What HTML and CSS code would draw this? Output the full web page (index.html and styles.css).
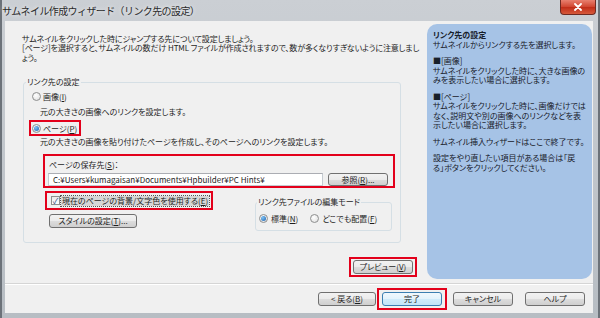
FILE: index.html
```html
<!DOCTYPE html>
<html lang="ja">
<head>
  <meta charset="UTF-8">
  <title>サムネイル作成ウィザード</title>
  <link rel="stylesheet" href="styles.css">
</head>
<body>
  <div class="window">
    <div class="titlebar">
      <span class="title">サムネイル作成ウィザード（リンク先の設定）</span>
      <div class="close">
        <svg width="10" height="8" viewBox="0 0 10 8">
          <path d="M2 1 L8 7 M8 1 L2 7" stroke="#fff" stroke-width="1.8" stroke-linecap="round"/>
        </svg>
      </div>
    </div>

    <div class="client">
      <div class="main">
        <div class="content">
          <p class="intro">サムネイルをクリックした時にジャンプする先について設定しましょう。<br>[ページ]を選択すると、サムネイルの数だけ HTML ファイルが作成されますので、数が多くなりすぎないように注意しまし<br>ょう。</p>

          <fieldset class="group">
            <legend>リンク先の設定</legend>
            <div class="option first"><span class="radio"></span>画像(<u>I</u>)</div>
            <div class="note">元の大きさの画像へのリンクを設定します。</div>
            <div class="option mark page-opt"><span class="radio on"></span>ページ(<u>P</u>)</div>
            <div class="note second">元の大きさの画像を貼り付けたページを作成し、そのページへのリンクを設定します。</div>

            <div class="save mark">
              <div class="save-label">ページの保存先(<u>S</u>)：</div>
              <div class="path-row">
                <div class="path">C:¥Users¥kumagaisan¥Documents¥Hpbuilder¥PC Hints¥</div>
                <button class="btn browse">参照(<u>R</u>)...</button>
              </div>
            </div>

            <div class="lower">
              <div class="lower-left">
                <div class="check mark">
                  <span class="box">✓</span>
                  <span class="focus">現在のページの背景/文字色を使用する(<u>E</u>)</span>
                </div>
                <button class="btn style-btn">スタイルの設定(<u>T</u>)...</button>
              </div>
              <fieldset class="mode">
                <legend>リンク先ファイルの編集モード</legend>
                <div class="mode-row">
                  <span class="option"><span class="radio on"></span>標準(<u>N</u>)</span>
                  <span class="option free"><span class="radio"></span>どこでも配置(<u>F</u>)</span>
                </div>
              </fieldset>
            </div>
          </fieldset>

          <div class="preview-row">
            <span class="mark preview"><button class="btn">プレビュー(<u>V</u>)</button></span>
          </div>
        </div>

        <aside class="help">
          <p class="help-title">リンク先の設定<br>サムネイルからリンクする先を選択します。</p>
          <p>■[画像]<br>サムネイルをクリックした時に、大きな画像の<br>みを表示したい場合に選択します。</p>
          <p>■[ページ]<br>サムネイルをクリックした時に、画像だけでは<br>なく、説明文や別の画像へのリンクなどを表<br>示したい場合に選択します。</p>
          <p>サムネイル挿入ウィザードはここで終了です。</p>
          <p>設定をやり直したい項目がある場合は「戻<br>る」ボタンをクリックしてください。</p>
        </aside>
      </div>

      <div class="footer">
        <button class="btn back">&lt; 戻る(<u>B</u>)</button>
        <span class="mark finish"><button class="btn default">完了</button></span>
        <button class="btn cancel">キャンセル</button>
        <button class="btn help-btn">ヘルプ</button>
      </div>
    </div>
  </div>
</body>
</html>
```

FILE: styles.css
```css
* {
  box-sizing: border-box;
}

body {
  margin: 0;
  width: 600px;
  height: 318px;
  overflow: hidden;
  font-family: "Noto Sans CJK JP", "Liberation Sans", sans-serif;
  font-size: 8px;
  color: #1e1e1e;
  font-feature-settings: "palt";
}

.window {
  height: 318px;
  display: flex;
  flex-direction: column;
  background: linear-gradient(#cbcfd4, #b7bdc3);
  border-left: 2px solid #6c7279;
  border-right: 2px solid #6c7279;
}

.titlebar {
  height: 21px;
  flex: none;
  display: flex;
  justify-content: space-between;
}

.title {
  font-size: 10px;
  line-height: 21px;
  color: #2a2a2a;
  font-feature-settings: normal;
  letter-spacing: -0.6px;
  text-shadow: 0 0 4px #fff;
}

.close {
  width: 36px;
  height: 15px;
  margin-right: 2px;
  border: 1px solid #6e2a22;
  border-top: none;
  border-radius: 0 0 4px 4px;
  background: linear-gradient(#e8806f, #d0442f 50%, #c02c18 51%, #d65a3c);
  display: flex;
  align-items: center;
  justify-content: center;
}

.client {
  flex: 1;
  margin: 0 5px 5px 3px;
  background: #f0f0f0;
  display: flex;
  flex-direction: column;
}

.main {
  height: 262px;
  flex: none;
  display: flex;
}

.content {
  width: 422px;
}

.intro {
  margin: 0;
  padding: 12.5px 0 0 17px;
  line-height: 9.5px;
  letter-spacing: -0.1px;
  white-space: nowrap;
}

u {
  text-decoration-thickness: 1px;
  text-underline-offset: 1px;
}

/* group boxes */
.group {
  margin: 15px 0 0 18px;
  width: 378px;
  padding: 0 0 11px 0;
  border: 1px solid #d5dfe5;
  border-radius: 3px;
  min-width: 0;
}

.group legend,
.mode legend {
  margin-left: 2px;
  padding: 0 1px;
  line-height: 10px;
}

.option {
  display: flex;
  align-items: center;
  white-space: nowrap;
}

.option.first {
  margin-top: 2px;
  height: 15px;
  padding-left: 8px;
}

.radio {
  width: 9px;
  height: 9px;
  margin-right: 2px;
  border: 1px solid #8e8f8f;
  border-radius: 50%;
  background: radial-gradient(circle at 40% 35%, #fff, #dcdcdc);
  display: inline-flex;
  align-items: center;
  justify-content: center;
  flex: none;
}

.radio.on::after {
  content: "";
  width: 5px;
  height: 5px;
  border-radius: 50%;
  background: radial-gradient(circle at 35% 35%, #7fc3f3, #1a5fb0);
}

.note {
  height: 15px;
  line-height: 15px;
  padding-left: 16px;
  white-space: nowrap;
}

.note.second {
  height: 12px;
  line-height: 12px;
}

.mark {
  border: 2px solid #e3001b;
}

.page-opt {
  display: inline-flex;
  margin: 1px 0 0 5px;
  height: 16px;
  padding: 0 2px 0 1px;
}

.save {
  margin: 6px 0 0 19px;
  width: 352px;
  height: 34px;
  padding: 0 5px 0 3px;
}

.save-label {
  margin-top: 4px;
  padding-left: 1px;
  line-height: 10px;
}

.path-row {
  margin-top: 3px;
  display: flex;
  gap: 5px;
}

.path {
  width: 275px;
  height: 13px;
  padding-left: 4px;
  line-height: 11px;
  background: #fff;
  border: 1px solid #c5cbd1;
  border-top-color: #abadb3;
  white-space: nowrap;
  overflow: hidden;
}

/* buttons */
.btn {
  font: inherit;
  font-feature-settings: "palt";
  height: 14px;
  width: 60px;
  padding: 0;
  line-height: 12px;
  color: #1e1e1e;
  border: 1px solid #707070;
  border-radius: 3px;
  background: linear-gradient(#f2f2f2, #ebebeb 50%, #dddddd 51%, #cfcfcf);
  white-space: nowrap;
}

.browse {
  height: 13px;
  line-height: 11px;
}

.lower {
  margin-top: 3px;
  display: flex;
}

.lower-left {
  width: 231px;
  flex: none;
}

.check {
  margin-left: 21px;
  width: 168px;
  height: 19px;
  padding-left: 4px;
  display: flex;
  align-items: center;
}

.box {
  width: 9px;
  height: 9px;
  margin-right: 1px;
  border: 1px solid #8e8f8f;
  background: linear-gradient(#e9e9e9, #fff);
  color: #1f3f7a;
  font-size: 8px;
  line-height: 7px;
  text-align: center;
  flex: none;
}

.focus {
  padding: 0 1px;
  line-height: 10px;
  background: #d6d6d6;
  outline: 1px dotted #555;
  white-space: nowrap;
}

.style-btn {
  margin: 4px 0 0 25px;
  width: 88px;
}

.mode {
  margin: 6px 0 0 0;
  width: 137px;
  padding: 0 0 5px 0;
  border: 1px solid #d5dfe5;
  border-radius: 3px;
  min-width: 0;
}

.mode legend {
  margin-left: 1px;
}

.mode-row {
  margin-top: 4px;
  height: 14px;
  display: flex;
  align-items: center;
  padding-left: 3px;
}

.mode-row .free {
  margin-left: 12px;
}

.mode-row .radio {
  margin-right: 3px;
}

.preview-row {
  margin-top: 14px;
  padding-right: 10px;
  display: flex;
  justify-content: flex-end;
}

.preview {
  padding: 1px 2px;
}

/* help panel */
.help {
  width: 165px;
  height: 255px;
  margin: 3px 1px 0 0;
  padding: 6px 0 0 6px;
  border-radius: 10px;
  background: #a6c3e6;
  color: #18202a;
  line-height: 9.5px;
  white-space: nowrap;
}

.help p {
  margin: 7px 0 0 0;
}

.help p.help-title {
  margin-top: 0;
}

.help-title::first-line {
  font-weight: bold;
}

/* footer */
.footer {
  flex: 1;
  border-top: 1px solid #d5d5d5;
  box-shadow: inset 0 1px #fff;
  display: flex;
  align-items: center;
  justify-content: flex-end;
  padding-right: 8px;
}

.back {
  width: 58px;
}

.finish {
  margin-left: 1px;
  padding: 2px 3px;
}

.default {
  border-color: #3c7fb1;
  background: linear-gradient(#f0f8fd, #e3f3fc 50%, #d0ebfa 51%, #c2e4f7);
}

.cancel {
  margin-left: 6px;
}

.help-btn {
  margin-left: 12px;
}
```
